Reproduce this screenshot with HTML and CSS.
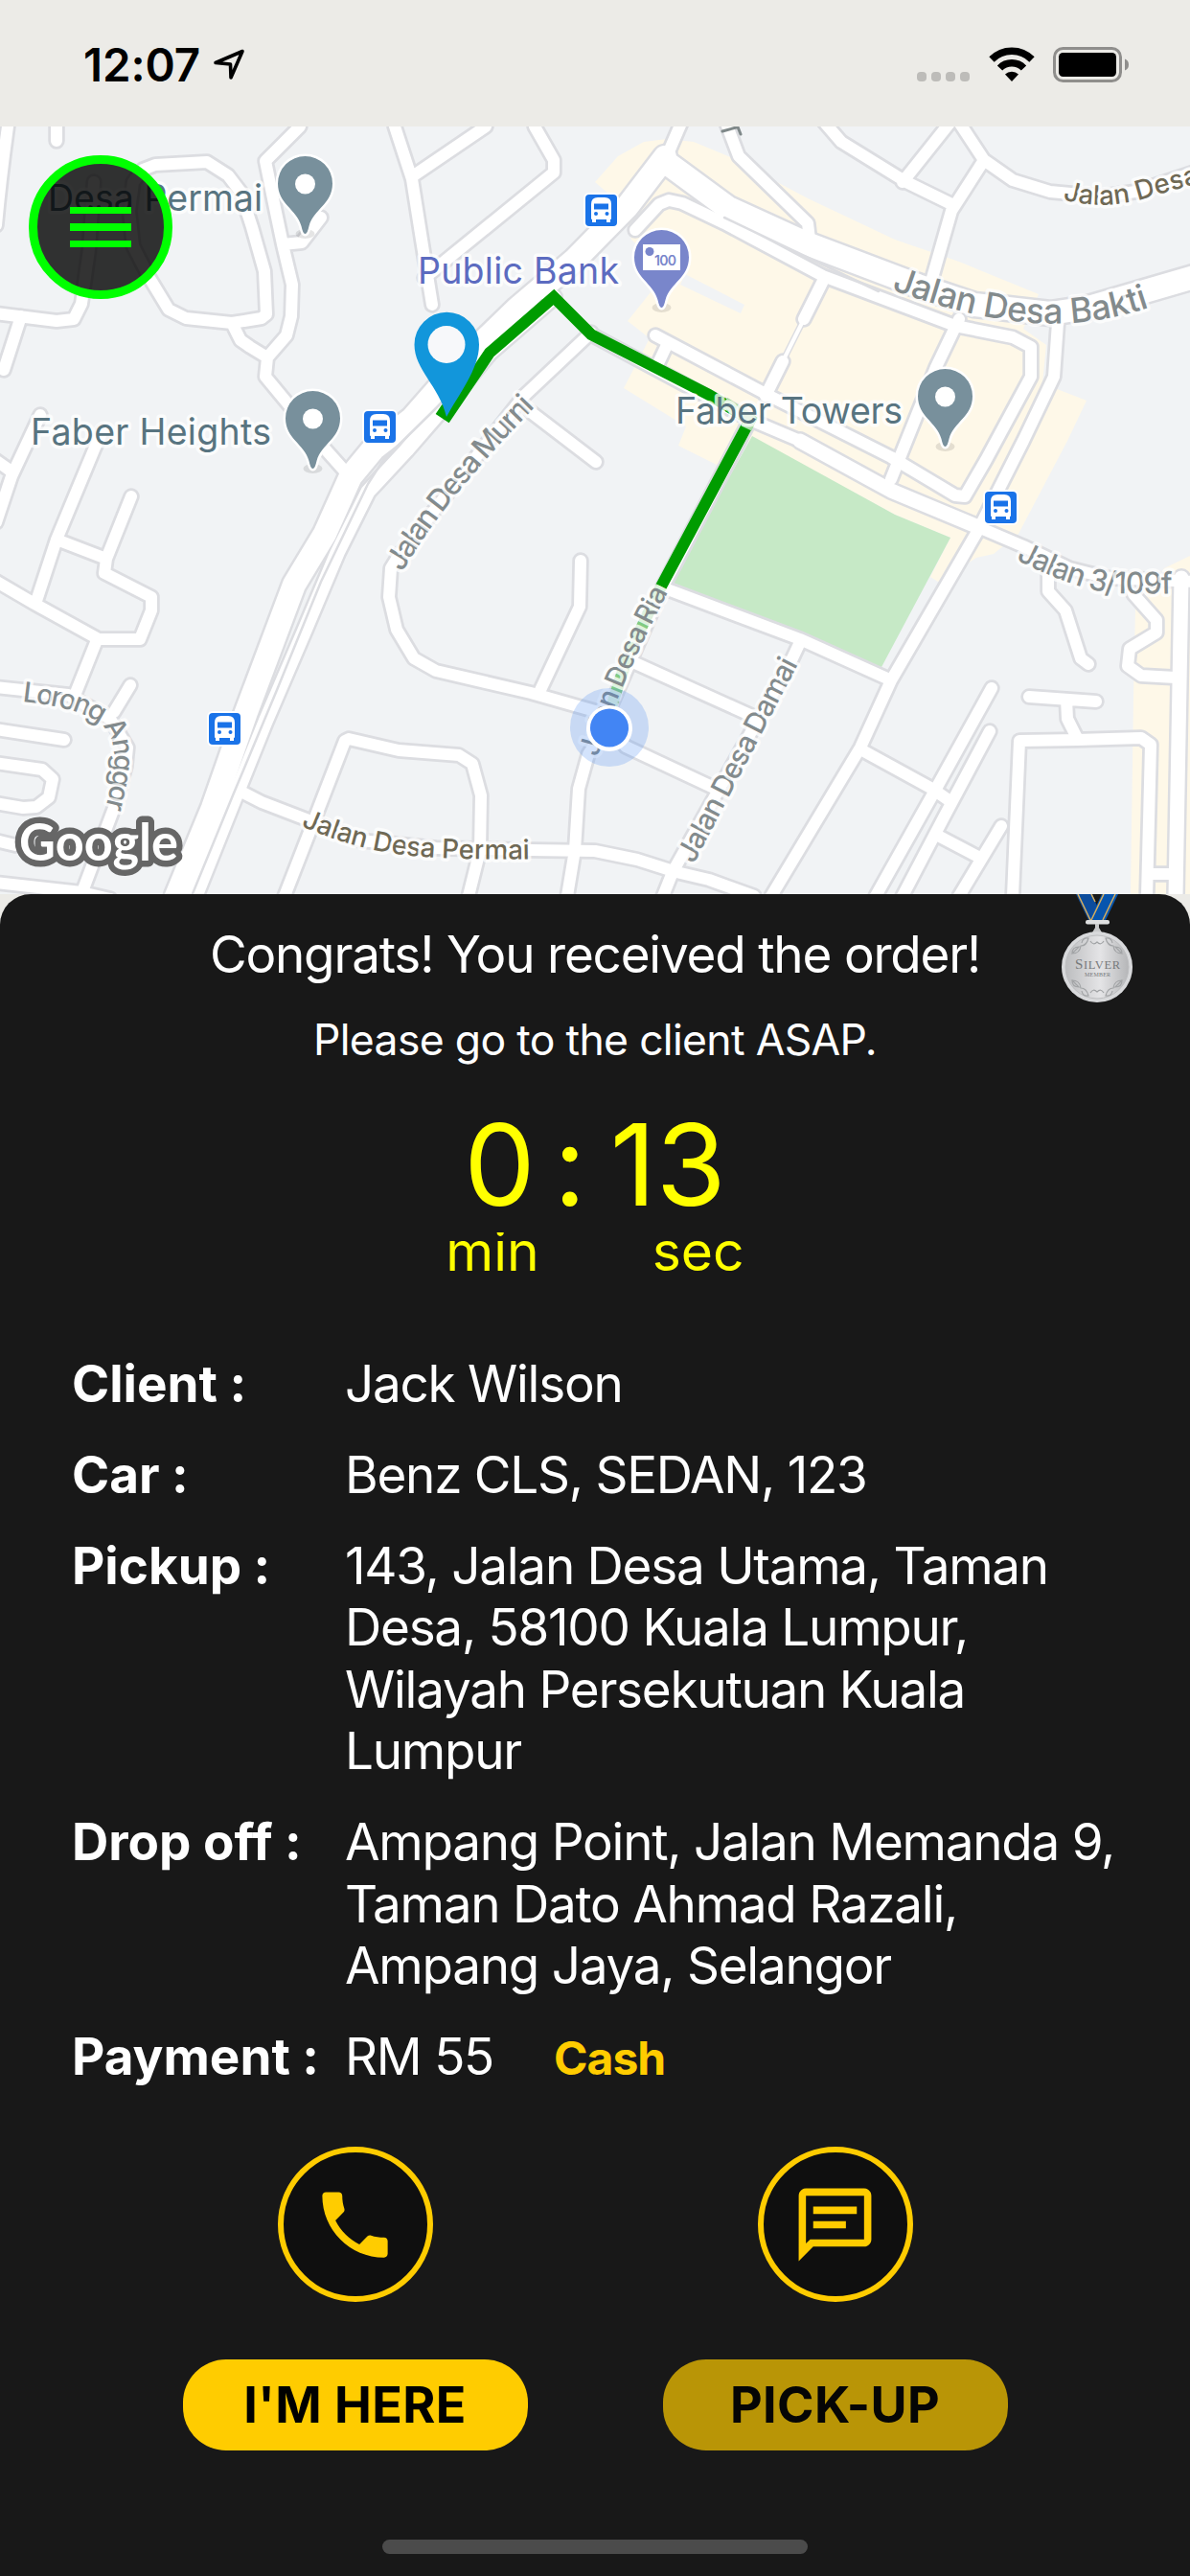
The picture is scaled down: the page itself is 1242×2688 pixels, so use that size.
FILE: index.html
```html
<!DOCTYPE html>
<html lang="en">
<head>
<meta charset="utf-8">
<title>Driver order</title>
<link rel="stylesheet" href="styles.css">
</head>
<body>
<header class="status">
  <span class="clock">12:07</span>
  <svg class="arrow" width="34" height="36" viewBox="0 0 34 36"><path d="M31 3.500 3 15.500 18.500 17 19 31Z" fill="none" stroke="#000" stroke-width="3.600" stroke-linejoin="round"/></svg>
  <span class="cell"><i></i><i></i><i></i><i></i></span>
  <svg class="wifi" width="48" height="37" viewBox="0 0 48 37"><path d="M24 36 17 28.500A10 10 0 0 1 31 28.500Z"/><path d="M11.500 22A17.500 17.500 0 0 1 36.500 22M3 13A29.500 29.500 0 0 1 45 13" fill="none" stroke="#000" stroke-width="7.500"/></svg>
  <svg class="battery" width="80" height="37" viewBox="0 0 80 37"><rect x="1.500" y="1.500" width="69" height="34" rx="9" fill="none" stroke="#8f8e8c" stroke-width="3"/><rect x="6" y="6" width="60" height="25" rx="4.500"/><path d="M75 12.500q4 1.500 4 6t-4 6z" fill="#8f8e8c"/></svg>
</header>

<main class="map">
<svg class="map-art" width="1242" height="801" viewBox="0 132 1242 801">
  <defs>
    <g id="bus"><rect x="-2" y="-2" width="37" height="37" rx="6" fill="#fff"/><rect width="33" height="33" rx="4" fill="#1a73e8"/><path d="M6 10q0-7 7-7h7q7 0 7 7v15q0 1-1 1v3h-4v-3H11v3H7v-3q-1 0-1-1z" fill="#fff"/><path d="M9 9.500h15v6H9z" fill="#1a73e8"/><circle cx="11" cy="20" r="2" fill="#1a73e8"/><circle cx="22.500" cy="20" r="2" fill="#1a73e8"/></g>
    <path id="drop" d="M0 81C-2 81-3 77-4 73-9 55-28.500 50-28.500 28.500A28.500 28.500 0 0 1 28.500 28.500C28.500 50 9 55 4 73 3 77 2 81 0 81Z"/>
    <g id="pin"><ellipse cy="81" rx="10" ry="5" fill="#000" opacity=".1"/><use href="#drop" stroke="#fff" stroke-width="5"/><use href="#drop"/></g>
    <g id="minor">
      <path d="M8 132Q0 190-4 235M59 132V147M139 190 149 177 162 172 216 169 238 183 251 200 263 237 276 283 278 328 273 332 242 337 194 332 176 323 156 290 139 257 135 220ZM313 132 277 168 287 217 295 255 305 297 304 330 299 350 279 373 277 393 301 422 329 457 362 494M295 255 315 253 335 227M242 337 251 355 261 362 279 373M-5 327 59 335 77 333 85 317 93 260 98 190M22 330 4 386"/>
      <path d="M42 433 12 497-4 545M-5 480 12 492M107 450 99 467 59 563 38 627M59 563 111 583M137 518 111 583 109 598 158 623 158 637 146 667 103 667 36 630-5 606M101 668 79 723M-5 717 71 725 115 750 133 780 131 800 119 843 85 933M136 715 119 743M-5 761 67 772M-5 796 44 803 55 813 51 832 38 842 24 843-5 838M-5 877 16 882M-5 921 85 931 115 938"/>
      <path d="M412 132 430 187 440 250 451 318M507 132 432 183M558 132 578 167 578 180 471 267 443 290M617 347 547 413 416 580 408 593 406 623 414 657 432 687 455 700 554 723 621 742 653 779 745 822M606 585 605 633 564 720M554 430 622 482M246 823 273 837 325 857 376 877 455 885 554 887 621 888 665 897 706 910 740 918 787 935"/>
      <path d="M297 935 329 853 360 773 364 771 416 783 479 788 493 797 502 830 501 887 489 935M632 760 614 787 604 823 600 887 592 935M712 126 696 163M663 240 688 213 698 209 712 212 756 233 859 288 997 340 1057 352 1076 362 1076 393 1029 480 1007 518 997 517 930 477 803 413 684 350M762 215 756 233M757 126 771 163 843 233 845 250"/>
      <path d="M859 126 878 148 946 190 993 213M993 126 942 190M1000 126 1027 167 1057 188 1096 200 1150 205 1185 200 1246 180M1027 167 993 220 973 290M859 293 839 333M817 377 799 413M1001 333 977 383 930 500M1104 337 1100 393 1068 460 1021 553 930 710 898 780 805 935M696 360 688 377M617 349 783 438 835 460 930 512 1021 550 1068 570 1116 593 1156 603 1246 607"/>
      <path d="M783 438 692 612 636 740M694 614 835 667 886 690 926 708M835 670 827 687 702 910 692 935M652 687 785 747M900 783 973 823 993 837M1035 718 973 830 914 935M1033 763 985 853 942 935M979 872 1019 893M1045 862 1001 935M1057 935 1064 773 1124 772 1191 770 1201 777 1197 935M1074 727 1144 732M1113 730 1114 750 1125 772M1094 600V617L1112 637 1128 687 1136 693M1183 620 1207 647 1207 660 1179 677 1177 695 1191 705 1227 707M1203 912H1227"/>
    </g>
    <g id="major"><path d="M694 164 655 215 600 271 540 322 480 380 430 437 390 468 366 497 339 557 307 610 257 743 222 843 184 935M696 170 760 217 839 253 958 298 1017 318 1096 327 1136 321 1246 289"/></g>
    <g id="side"><path d="M578 310 511 368 463 425 424 470 384 513 352 577 317 660 277 753 246 830 204 935M835 460 930 512 1021 550M1233 603 1227 935"/></g>
    <path id="bakti" d="M930 302Q1015 333 1080 337T1210 317"/>
    <path id="murni" d="M420 597Q461 524 562 421"/>
    <path id="anggor" d="M23 732C60 736 92 743 108 759 124 777 121 800 109 848"/>
    <path id="permai" d="M314 862Q375 888 430 893T570 896"/>
    <path id="ria" d="M624 790Q640 728 698 616"/>
    <path id="damai" d="M724 902 836 687"/>
    <path id="f109" d="M1060 584Q1130 618 1165 619T1235 619"/>
    <path id="desa" d="M1109 208Q1150 220 1195 207T1270 186"/>
  </defs>
  <rect y="132" width="1242" height="801" fill="#f1f3f5"/>
  <path fill="#fef8e8" d="M621 190 645 163 672 148 696 145 724 148 760 163 843 207 934 250 1001 273 1084 307 1068 343 1092 360 1088 400 1134 418 1114 460 1063 557 1037 578 1019 582 979 607 971 602 992 561 934 537 787 457 748 485 708 465 716 445 651 405 678 353 655 335 695 285 659 250 650 215ZM1242 580 1215 593 1185 633 1183 727 1180 933H1242Z"/>
  <path fill="#f1f3f5" d="M715 286 777 318 773 327 710 297Z"/>
  <path fill="#c6e9c6" d="M785 455 934 537 992 561 919 698 700 607Z"/>
  <g fill="none" stroke-linecap="round" stroke-linejoin="round">
    <path d="M839 333 817 377" stroke="#dcdde1" stroke-width="7"/>
    <g stroke="#dcdde1"><use href="#minor" stroke-width="17.500"/><use href="#side" stroke-width="20"/><use href="#major" stroke-width="29"/></g>
    <g stroke="#fff"><use href="#minor" stroke-width="12"/><use href="#major" stroke-width="24"/><use href="#side" stroke-width="15"/></g>
    <path d="M839 333 817 377" stroke="#fff" stroke-width="4"/>
    <path d="M566 313 451 430 400 480 384 505 335 607 289 720 243 830 200 935M756 227 850 272 917 304" stroke="#dcdde1" stroke-width="2.500"/>
    <path d="M458 427 467 433 511 368 578 310 617 349 740 412 783 438 690 612" stroke="#009c00" stroke-width="12" stroke-linecap="butt" stroke-linejoin="miter"/>
    <path d="M690 612 655 685 634 750" stroke="#82cb82" stroke-width="12" stroke-linecap="butt"/>
    <path d="M756 420 783 438 779 447" stroke="#a7dca7" stroke-width="12" stroke-linecap="butt"/>
    <path d="M754 137 770 132.500 773 140" stroke="#7f8889" stroke-width="3"/>
  </g>
  <g class="road">
    <text font-size="36"><textPath href="#bakti" textLength="276">Jalan Desa Bakti</textPath></text>
    <text font-size="31"><textPath href="#murni" textLength="222">Jalan Desa Murni</textPath></text>
    <text font-size="29"><textPath href="#anggor" textLength="179">Lorong Anggor</textPath></text>
    <text font-size="29"><textPath href="#ria" textLength="188">Jalan Desa Ria</textPath></text>
    <text font-size="30"><textPath href="#damai" textLength="236">Jalan Desa Damai</textPath></text>
    <text font-size="31"><textPath href="#f109" textLength="170">Jalan 3/109f</textPath></text>
    <text class="olive" font-size="28"><textPath href="#permai" textLength="244">Jalan Desa Permai</textPath></text>
    <text class="olive" font-size="28"><textPath href="#desa">Jalan Desa</textPath></text>
  </g>
  <g class="place">
    <text x="50" y="220" textLength="224">Desa Permai</text>
    <text x="32" y="464" textLength="251">Faber Heights</text>
    <text x="705" y="442" textLength="237">Faber Towers</text>
    <text class="bank" x="436" y="296" textLength="210">Public Bank</text>
  </g>
  <use href="#bus" x="611" y="203"/><use href="#bus" x="380" y="429"/><use href="#bus" x="1028" y="513"/><use href="#bus" x="218" y="744"/>
  <g fill="#78909c"><use href="#pin" x="318.500" y="163"/><use href="#pin" x="326.500" y="408"/><use href="#pin" x="986.500" y="385"/></g>
  <use href="#pin" x="690.500" y="240" fill="#7986cb"/>
  <g fill="#fff"><circle cx="318.500" cy="192" r="10.500"/><circle cx="326.500" cy="437" r="10.500"/><circle cx="986.500" cy="414" r="10.500"/><rect x="671" y="255" width="39" height="27"/></g>
  <circle cx="678" cy="262.500" r="4.500" fill="#7986cb"/><text class="note" x="683" y="277" textLength="23">100</text>
  <path d="M466 435C458 402 432.500 386 432.500 359.500A33.500 33.500 0 0 1 500 359.500C500 386 478 412 466 435Z" fill="#1296db"/><circle cx="466" cy="359.500" r="19.500" fill="#f7f8fa"/>
  <circle cx="636" cy="759" r="41" fill="#4285f4" opacity=".23"/><circle cx="636" cy="760" r="24" fill="#fff"/><circle cx="636" cy="759.500" r="20" fill="#4285f4"/>
  <text class="google" x="20" y="898" textLength="166" lengthAdjust="spacingAndGlyphs">Google</text>
</svg>
<button class="menu" aria-label="Menu"><i></i><i></i><i></i></button>
</main>

<section class="sheet">
  <svg class="medal" width="76" height="116" viewBox="0 0 76 116">
    <defs><linearGradient id="silver"><stop offset="0" stop-color="#bcbdbf"/><stop offset=".55" stop-color="#e4e4e6"/><stop offset="1" stop-color="#b5b6b8"/></linearGradient></defs>
    <path d="M16 0h17L44 27H29Z" fill="#0d4c9c"/><path d="M43 0h17L47 27H30Z" fill="#0755ae"/><path d="M18 0 31 27M45 0 32 27M57 0 44 27M32 0 36 8" fill="none" stroke="#d7ad5c" stroke-width="1.500"/>
    <rect x="26" y="27" width="25" height="4.500" rx="2" fill="#dedfe0"/><path d="M36 31h4v4l3 5H33l3-5z" fill="#c8c9ca"/>
    <circle cx="38" cy="76" r="37" fill="#d8d9db"/><circle cx="38" cy="76" r="33" fill="url(#silver)" stroke="#bdbec0"/>
    <g fill="none" stroke="#a2a4a6" stroke-width="1.200"><path id="orn" d="M12 62q0-7 7-7-5 5-7 7 8 0 9-8 6 0 8-8-6-1-7 5M64 62q0-7-7-7 5 5 7 7-8 0-9-8-6 0-8-8 6-1 7 5M31 49q3 5 7 1 4 4 7-1"/><use href="#orn" transform="matrix(1 0 0 -1 0 152)"/></g>
    <text x="15" y="78" font-size="15" textLength="47">S<tspan font-size="12.500">ILVER</tspan></text><text x="25" y="86" font-size="6" textLength="27">MEMBER</text>
  </svg>
  <h1>Congrats! You received the order!</h1>
  <p class="sub">Please go to the client ASAP.</p>
  <div class="time"><span>0</span><span class="colon">:</span><span>13</span></div>
  <div class="units"><span>min</span><span>sec</span></div>
  <dl>
    <dt>Client :</dt><dd>Jack Wilson</dd>
    <dt>Car :</dt><dd>Benz CLS, SEDAN, 123</dd>
    <dt>Pickup :</dt><dd>143, Jalan Desa Utama, Taman<br>Desa, 58100 Kuala Lumpur,<br>Wilayah Persekutuan Kuala<br>Lumpur</dd>
    <dt>Drop off :</dt><dd>Ampang Point, Jalan Memanda 9,<br>Taman Dato Ahmad Razali,<br>Ampang Jaya, Selangor</dd>
    <dt>Payment :</dt><dd>RM 55<b>Cash</b></dd>
  </dl>
  <div class="actions">
    <button class="round" aria-label="Call"><svg width="91" height="91" viewBox="0 0 24 24"><path d="M6.620 10.790c1.440 2.830 3.760 5.140 6.590 6.590l2.200-2.200c.27-.27.67-.36 1.020-.24 1.120.37 2.330.57 3.570.57.55 0 1 .45 1 1V20c0 .55-.45 1-1 1-9.390 0-17-7.610-17-17 0-.55.45-1 1-1h3.500c.55 0 1 .45 1 1 0 1.250.2 2.450.57 3.570.11.35.03.74-.25 1.020l-2.200 2.200z"/></svg></button>
    <button class="round" aria-label="Message"><svg width="91" height="91" viewBox="0 0 24 24"><path d="M4 4h16v12H5.170L4 17.170V4m0-2c-1.100 0-1.990.9-1.990 2L2 22l4-4h14c1.100 0 2-.9 2-2V4c0-1.100-.9-2-2-2H4zM6 7h12v2H6zM6 11h9v2H6z"/></svg></button>
    <button class="pill">I'M HERE</button>
    <button class="pill dim">PICK-UP</button>
  </div>
  <div class="home"></div>
</section>
</body>
</html>
```
FILE: styles.css
```css
* { box-sizing: border-box; }
body { margin: 0; width: 1242px; background: #ecebe7; font-family: Inter, "Liberation Sans", sans-serif; color: #fff; }
button { font: inherit; margin: 0; padding: 0; border: 0; }

.status { height: 132px; display: flex; align-items: flex-start; padding: 49px 63px 0 87px; color: #000; }
.clock { font-size: 47.5px; font-weight: 600; line-height: 38px; letter-spacing: -0.1px; width: 135px; }
.arrow { margin-top: 1px; }
.cell { display: flex; gap: 5px; margin: 26px 20px 0 auto; }
.cell i { width: 10px; height: 10px; border-radius: 4px; background: #bdbcb9; }
.battery { margin-left: 19px; }

.map { position: relative; height: 801px; }
.map-art { display: block; }
.map text { paint-order: stroke; stroke: rgba(255, 255, 255, 0.75); stroke-width: 7px; stroke-linejoin: round; }
.map .road text { fill: #838b8d; font-weight: 500; }
.map .road .olive { fill: #6f6955; }
.map .place text { font-size: 37.5px; fill: #587480; }
.map .place .bank { fill: #5c6bc0; }
.map .note { font-size: 14px; fill: #7986cb; stroke: none; font-weight: 600; }
.map .google { font-family: Lato, sans-serif; font-size: 54px; font-weight: 700; fill: #fff; stroke: #666; stroke-width: 13px; }
.menu { position: absolute; left: 30px; top: 30px; width: 150px; height: 150px; border: 9px solid #0f0; border-radius: 50%; background: rgba(0, 0, 0, 0.8); display: flex; flex-direction: column; align-items: center; justify-content: center; gap: 10px; }
.menu i { width: 64px; height: 7.5px; background: #0f0; }

.sheet { position: relative; height: 1755px; padding-top: 31px; background: #181818; border-radius: 32px 32px 0 0; }
.medal { position: absolute; left: 1106.5px; top: 0; }
.medal text { font-family: "Liberation Serif", serif; fill: #77797b; }
h1 { margin: 0; text-align: center; font-size: 53px; font-weight: 400; line-height: 64px; letter-spacing: -1.2px; }
.sub { margin: 30px 0 33px; text-align: center; font-size: 44.5px; line-height: 54px; letter-spacing: -0.68px; }
.time { display: flex; justify-content: center; gap: 22px; font-size: 118px; line-height: 140px; color: #ff0; }
.colon { margin: 0 3px 0 -3px; }
.units { display: flex; justify-content: center; gap: 118px; margin-top: 1px; padding-bottom: 4px; overflow: hidden; font-size: 57px; line-height: 39px; color: #ff0; }
dl { margin: 83px 0 0; padding: 0 40px 0 75px; display: grid; grid-template-columns: 285px 1fr; row-gap: 30.6px; font-size: 53px; line-height: 64.4px; white-space: nowrap; }
dt { font-weight: 700; }
dd { margin: 0; letter-spacing: -1.25px; }
dd b { margin-left: 63px; font-size: 48px; letter-spacing: -1px; color: #fc0; }
.actions { margin: 60px 120px 0; display: grid; grid-template-columns: 501px 501px; row-gap: 60px; justify-items: center; }
.round { width: 162px; height: 162px; display: grid; place-items: center; border: 6px solid #fc0; border-radius: 50%; background: #0f0f0f; fill: #fc0; }
.pill { width: 360px; height: 95px; border-radius: 45px; background: #fc0; color: #000; font-size: 52px; font-weight: 700; letter-spacing: 0.4px; }
.dim { background: #b99506; color: #050505; }
.home { width: 444px; height: 15px; margin: 93px auto 0; border-radius: 8px; background: #4b4b4b; }
```
